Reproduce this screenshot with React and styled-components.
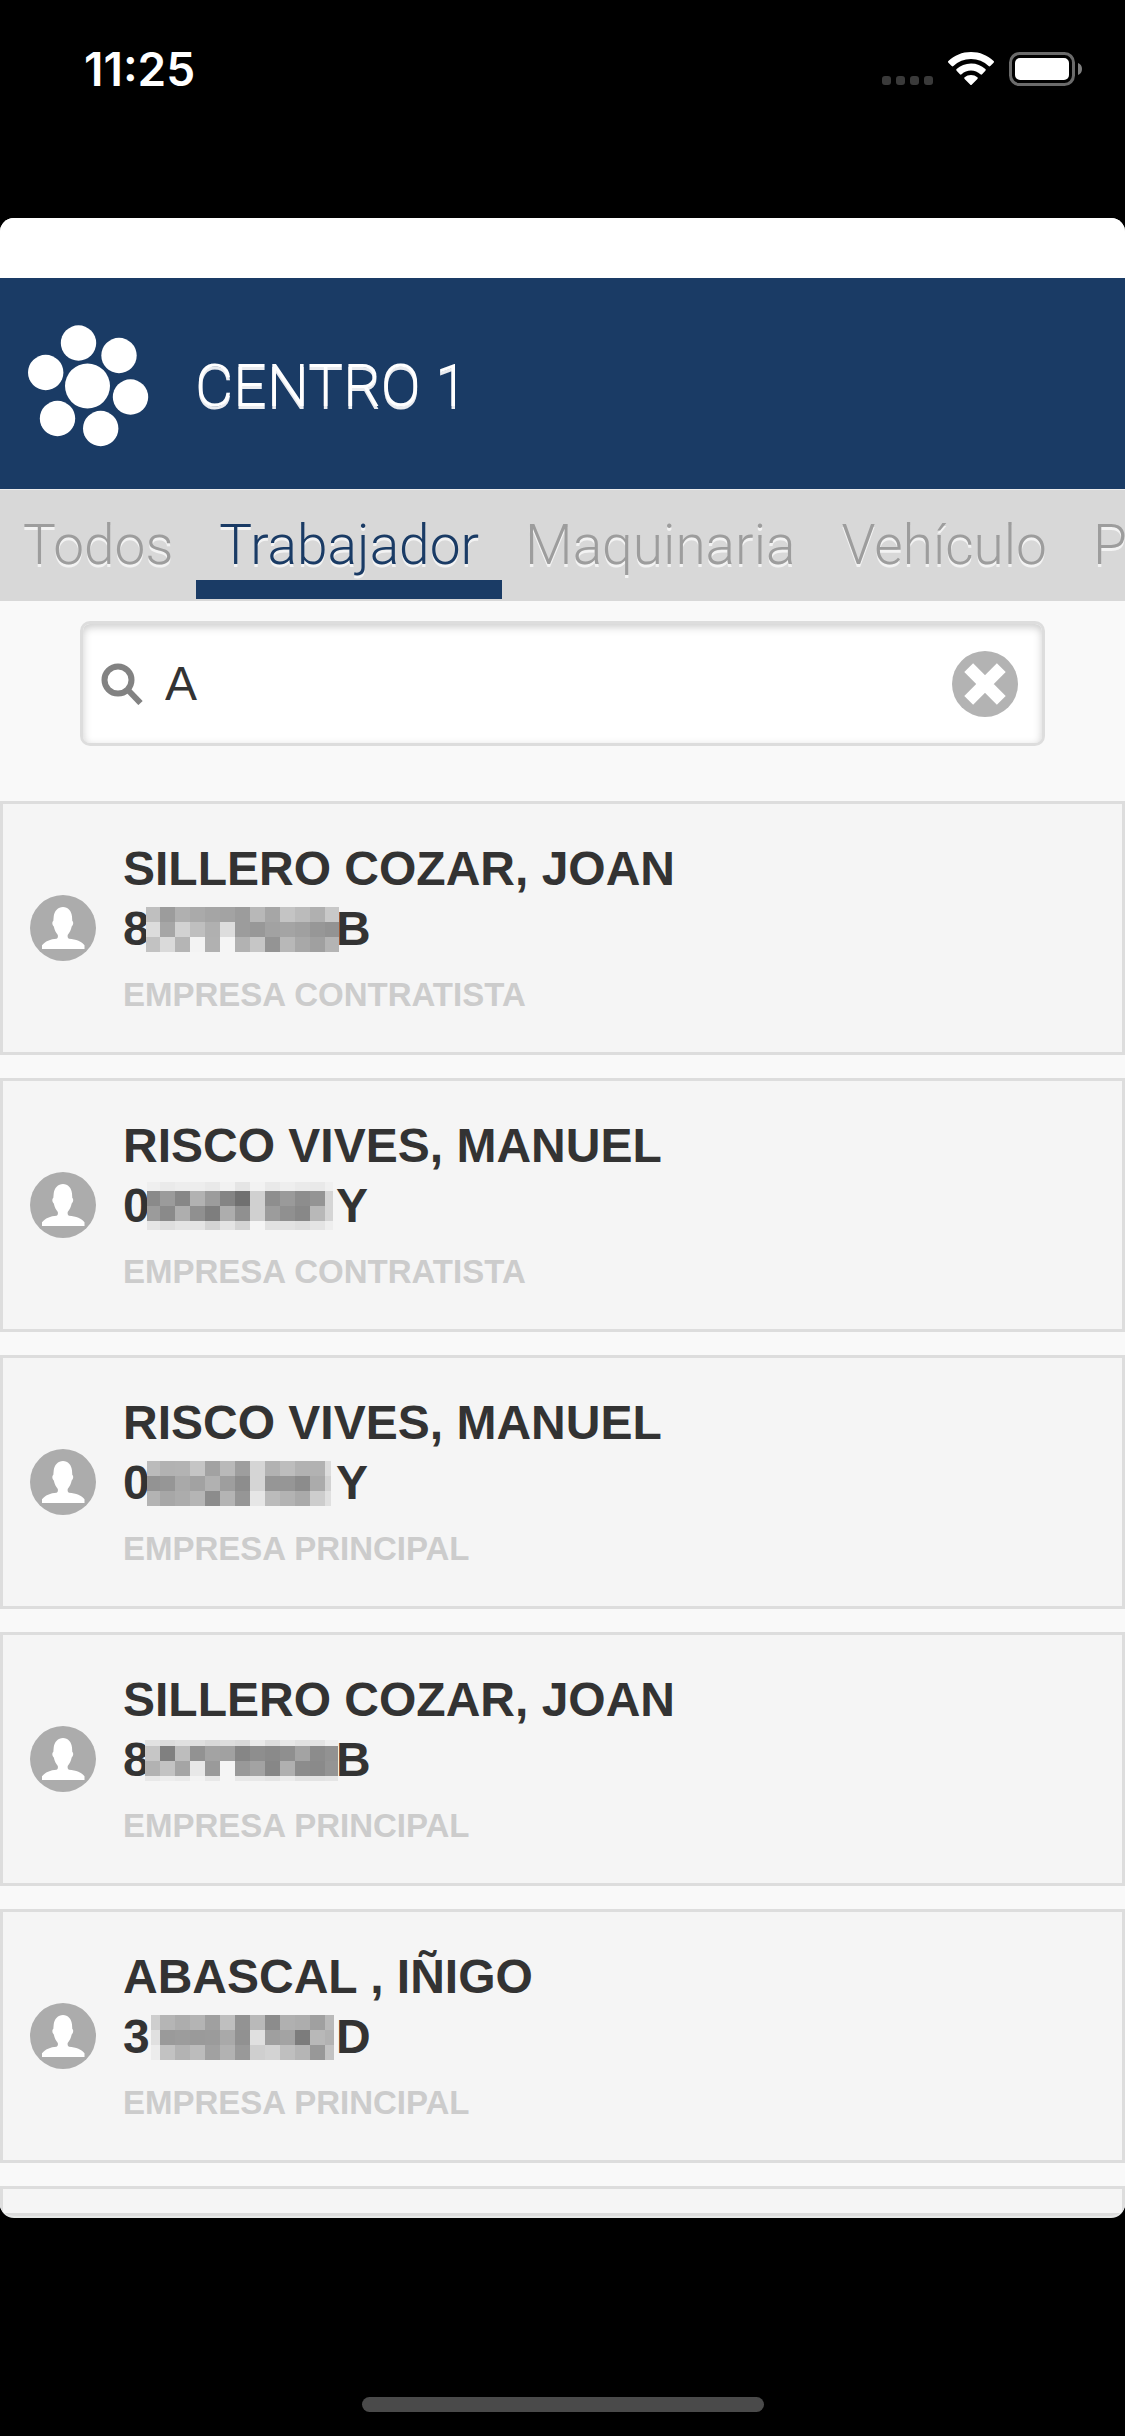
import React, { useState } from 'react';
import styled, { createGlobalStyle } from 'styled-components';

const GlobalStyle = createGlobalStyle`
  * {
    box-sizing: border-box;
  }

  body {
    margin: 0;
    background: #000;
    font-family: 'Liberation Sans', Arial, sans-serif;
  }

  button {
    font: inherit;
    border: none;
    padding: 0;
    background: none;
    cursor: pointer;
  }
`;

const Screen = styled.div`
  display: flex;
  flex-direction: column;
  height: 100vh;
  background: #000;
`;

const StatusBar = styled.header`
  display: flex;
  flex: none;
  align-items: flex-start;
  justify-content: space-between;
  height: 218px;
  padding: 40px 43px 0 84px;
`;

const Clock = styled.time`
  color: #fff;
  font-family: Inter, sans-serif;
  font-size: 46px;
  font-weight: 600;
  line-height: 58px;
`;

const StatusIcons = styled.div`
  display: flex;
  align-items: flex-end;
  gap: 15px;
  padding-top: 12px;
`;

const Sheet = styled.main`
  display: flex;
  flex: 1;
  flex-direction: column;
  min-height: 0;
  overflow: hidden;
  border-radius: 14px;
  background: #f9f9f9;
  border-bottom: 2px solid #e6e8e7;
`;

const SheetTop = styled.div`
  flex: none;
  height: 60px;
  background: #fff;
`;

const TitleBar = styled.div`
  display: flex;
  flex: none;
  align-items: center;
  gap: 46px;
  height: 211px;
  padding: 4px 28px 0;
  background: #1a3b65;

  > h1 {
    margin: 0;
    color: #fff;
    font-family: Roboto, sans-serif;
    font-size: 59px;
    font-weight: 300;
    line-height: 64px;
    text-shadow: 0 3px 0 #e9ebef;
  }
`;

const Tabs = styled.nav`
  display: flex;
  flex: none;
  height: 112px;
  overflow: hidden;
  border-top: 1px solid #ececec;
  background: #d8d8d8;
`;

const Tab = styled.button`
  flex: none;
  height: 109px;
  padding: 20px 23px 0;
  border-bottom: 19px solid ${(props) => (props.$active ? '#1a3b65' : 'transparent')};
  color: ${(props) => (props.$active ? '#1a3b65' : '#9d9d9d')};
  font-family: Roboto, sans-serif;
  font-size: 55px;
  font-weight: 300;
  line-height: 70px;
  text-shadow: 0 3px 0 #f3f3f3;
`;

const SearchArea = styled.div`
  flex: none;
  padding: 20px 80px 55px;
`;

const SearchBox = styled.div`
  display: flex;
  align-items: center;
  height: 125px;
  padding: 0 24px 0 18px;
  border: 3px solid #ddd;
  border-radius: 10px;
  background: #fff;
  box-shadow: inset 0 3px 8px #ccc;

  > input {
    flex: 1;
    min-width: 0;
    margin: 0 22px;
    padding: 0;
    border: none;
    outline: none;
    background: transparent;
    color: #333;
    font-family: 'Liberation Sans', Arial, sans-serif;
    font-size: 48px;
    line-height: 60px;
  }
`;

const ClearButton = styled.button`
  display: flex;
  flex: none;
`;

const List = styled.ul`
  display: flex;
  flex: 1;
  flex-direction: column;
  gap: 23px;
  min-height: 0;
  margin: 0;
  padding: 0;
  list-style: none;
  border-bottom: 3px solid #dcdcdc;
`;

const Card = styled.li`
  display: flex;
  flex: none;
  align-items: center;
  gap: 27px;
  height: 254px;
  padding: 0 27px;
  border: 3px solid #ddd;
  background: #f5f5f5;
`;

const NextCard = styled.li`
  flex: 1;
  border: 3px solid #ddd;
  border-bottom: none;
  background: #f5f5f5;
`;

const CardText = styled.div`
  padding-top: 8px;
  color: #333;
  font-size: 48px;
  font-weight: bold;
  line-height: 60px;
`;

const IdNumber = styled.div`
  display: grid;
  grid-template-columns: 22px 191px auto;
  align-items: center;
`;

const Company = styled.div`
  padding-top: 6px;
  color: #ccc;
  font-size: 33px;
  line-height: 60px;
`;

const MosaicSvg = styled.svg`
  position: relative;
  display: block;
`;

const BottomArea = styled.footer`
  display: flex;
  flex: none;
  align-items: flex-end;
  justify-content: center;
  height: 218px;
  padding-bottom: 24px;
`;

const HomeIndicator = styled.div`
  width: 402px;
  height: 15px;
  border-radius: 8px;
  background: #4a4a4a;
`;

const tabs = ['Todos', 'Trabajador', 'Maquinaria', 'Vehículo', 'P'];

// hidden digits: every pair of hex digits is the grey of one 15px block
const workers = [
  {
    name: 'SILLERO COZAR, JOAN',
    first: '8',
    last: 'B',
    company: 'EMPRESA CONTRATISTA',
    start: 1,
    end: 194,
    rows: [
      [15, 'bf9cb0aaa5a39cb8a6c4bbb0c8'],
      [15, 'dca6d2bfb0dd9c98a2a4a09793'],
      [15, 'c2dab5f3b1f5b2c694b8a8a0b4'],
    ],
  },
  {
    name: 'RISCO VIVES, MANUEL',
    first: '0',
    last: 'Y',
    company: 'EMPRESA CONTRATISTA',
    start: 2,
    end: 188,
    rows: [
      [9, 'efeaedede9f1e5f2e9eeeae9f0'],
      [15, '8a9b87b29c8470d08e9a8d94d5'],
      [15, '9b8aae907ead90d09c9088b8d5'],
      [9, 'e6dee4e4d4e4d4f5e2e2dee4ee'],
    ],
  },
  {
    name: 'RISCO VIVES, MANUEL',
    first: '0',
    last: 'Y',
    company: 'EMPRESA PRINCIPAL',
    start: 2,
    end: 186,
    rows: [
      [15, 'bbb2b3c5a2b99ed5b2bdb2b2dc'],
      [15, '9396a9a2b19e8dd596968cabd2'],
      [15, 'b3a7acb58cb496e6bbb3aacde0'],
    ],
  },
  {
    name: 'SILLERO COZAR, JOAN',
    first: '8',
    last: 'B',
    company: 'EMPRESA PRINCIPAL',
    start: 0,
    end: 193,
    rows: [
      [6, 'e2dce0e0d9ddd9eadde8e2e4ee'],
      [15, 'c680bd92a3a1868e8a8fa38c92'],
      [15, 'b2c3a5e89af599a387b08c8a94'],
      [5, 'e8edeaf3e8f5e8e8e4ece3e3e5'],
    ],
  },
  {
    name: 'ABASCAL , IÑIGO',
    first: '3',
    last: 'D',
    company: 'EMPRESA PRINCIPAL',
    start: 6,
    end: 189,
    rows: [
      [15, 'ceb5adb4a0bf93b98cb0ada0b9'],
      [15, 'e09a9c9a9ba991e09fa37cb8b2'],
      [15, 'ecc2b3bca1b299cfd3bfb598c2'],
    ],
  },
];

const Mosaic = ({ start, end, rows }) => {
  let y = 0;
  const blocks = [];
  rows.forEach(([height, greys]) => {
    greys.match(/../g).forEach((grey, i) => {
      const x = Math.max(start, i * 15);
      const right = Math.min(end, (i + 1) * 15);
      blocks.push(
        <rect key={`${y}-${i}`} x={x} y={y} width={right - x} height={height} fill={`#${grey}${grey}${grey}`} />
      );
    });
    y += height;
  });

  return (
    <MosaicSvg width='195' height={y} shapeRendering='crispEdges' aria-hidden='true'>
      {blocks}
    </MosaicSvg>
  );
};

const SignalDots = () => (
  <svg width='51' height='10' viewBox='0 0 51 10' aria-hidden='true'>
    {[0, 14, 28, 42].map((x) => (
      <rect key={x} x={x} y='0' width='9' height='9' rx='3' fill='#3a3a3a' />
    ))}
  </svg>
);

const Wifi = () => (
  <svg width='46' height='34' viewBox='0 0 46 34' fill='#fff' aria-hidden='true'>
    <path d='M23 0C14.200 0 6.200 3.400 .4 9a1.200 1.200 0 0 0 0 1.700l3.300 3.300a1.200 1.200 0 0 0 1.700 0A25.400 25.400 0 0 1 23 7a25.400 25.400 0 0 1 17.600 7a1.200 1.200 0 0 0 1.700 0l3.300-3.300a1.200 1.200 0 0 0 0-1.700C39.800 3.400 31.800 0 23 0z' />
    <path d='M23 11.500c-5.500 0-10.600 2.100-14.400 5.600a1.200 1.200 0 0 0 0 1.700l3.300 3.400a1.200 1.200 0 0 0 1.700 0A13.800 13.800 0 0 1 23 18.500c3.600 0 6.900 1.400 9.400 3.700a1.200 1.200 0 0 0 1.700 0l3.300-3.400a1.200 1.200 0 0 0 0-1.700A21 21 0 0 0 23 11.500z' />
    <path d='M23 23a10 10 0 0 0-6.400 2.300a1.200 1.200 0 0 0 0 1.700l5.500 5.600a1.200 1.200 0 0 0 1.800 0l5.500-5.600a1.200 1.200 0 0 0 0-1.700A10 10 0 0 0 23 23z' />
  </svg>
);

const Battery = () => (
  <svg width='73' height='34' viewBox='0 0 73 34' aria-hidden='true'>
    <rect x='1.500' y='1.500' width='63' height='31' rx='9' fill='none' stroke='#6b6b6b' strokeWidth='3' />
    <rect x='6' y='6' width='54' height='22' rx='5' fill='#fff' />
    <path d='M69 11c2.600 1 4 3.300 4 6s-1.400 5-4 6z' fill='#7f7f7f' />
  </svg>
);

const Logo = () => (
  <svg width='121' height='122' viewBox='0 0 121 122' fill='#fff' aria-hidden='true'>
    <circle cx='59.500' cy='61' r='22.500' />
    <circle cx='50.500' cy='18' r='17.700' />
    <circle cx='91' cy='30.500' r='17.700' />
    <circle cx='102.500' cy='72' r='17.700' />
    <circle cx='72.700' cy='103.500' r='17.700' />
    <circle cx='29.500' cy='93.500' r='17.700' />
    <circle cx='17.700' cy='47.500' r='17.700' />
  </svg>
);

const SearchIcon = () => (
  <svg width='42' height='42' viewBox='0 0 42 42' fill='none' stroke='#828282' aria-hidden='true'>
    <circle cx='17' cy='17' r='13.500' strokeWidth='6' />
    <path d='M26 26l13.500 14' strokeWidth='6' />
  </svg>
);

const ClearIcon = () => (
  <svg width='66' height='66' viewBox='0 0 66 66' aria-hidden='true'>
    <circle cx='33' cy='33' r='33' fill='#b3b3b3' />
    <path d='M16.700 16.700l32.600 32.600M49.300 16.700L16.700 49.300' stroke='#fff' strokeWidth='12.500' />
  </svg>
);

const Avatar = () => (
  <svg width='66' height='66' viewBox='0 0 66 66' aria-hidden='true'>
    <circle cx='33' cy='33' r='33' fill='#acacac' />
    <path
      d='M33 12c5 0 8.500 4 9 9.500l.3 4.500c1.300.6 1.300 4-.6 5.500c-.8 3.500-2 6-4 8.500c-.4 2 .3 3.300 1.300 3.700c7 .3 13 3 15.500 6.500V54h-42.500v-3.800c3-3.800 8.500-6.200 14.500-6.500c1.200-.5 1.700-1.700 1.300-3.700c-2-2.500-3.200-5-4-8.500c-1.800-1.500-1.800-4.900-.5-5.500l.4-4.500C24.300 16 28 12 33 12z'
      fill='#fff'
    />
  </svg>
);

const App = () => {
  const [activeTab, setActiveTab] = useState('Trabajador');
  const [search, setSearch] = useState('A');

  return (
    <Screen>
      <GlobalStyle />
      <StatusBar>
        <Clock>11:25</Clock>
        <StatusIcons>
          <SignalDots />
          <Wifi />
          <Battery />
        </StatusIcons>
      </StatusBar>
      <Sheet>
        <SheetTop />
        <TitleBar>
          <Logo />
          <h1>CENTRO 1</h1>
        </TitleBar>
        <Tabs>
          {tabs.map((tab) => (
            <Tab key={tab} type='button' $active={tab === activeTab} onClick={() => setActiveTab(tab)}>
              {tab}
            </Tab>
          ))}
        </Tabs>
        <SearchArea>
          <SearchBox>
            <SearchIcon />
            <input
              type='text'
              aria-label='Buscar'
              value={search}
              onChange={(event) => setSearch(event.target.value)}
            />
            <ClearButton type='button' aria-label='Borrar' onClick={() => setSearch('')}>
              <ClearIcon />
            </ClearButton>
          </SearchBox>
        </SearchArea>
        <List>
          {workers.map((worker, index) => (
            <Card key={index}>
              <Avatar />
              <CardText>
                <div>{worker.name}</div>
                <IdNumber>
                  <span>{worker.first}</span>
                  <Mosaic start={worker.start} end={worker.end} rows={worker.rows} />
                  <span>{worker.last}</span>
                </IdNumber>
                <Company>{worker.company}</Company>
              </CardText>
            </Card>
          ))}
          <NextCard />
        </List>
      </Sheet>
      <BottomArea>
        <HomeIndicator />
      </BottomArea>
    </Screen>
  );
};

export default App;
